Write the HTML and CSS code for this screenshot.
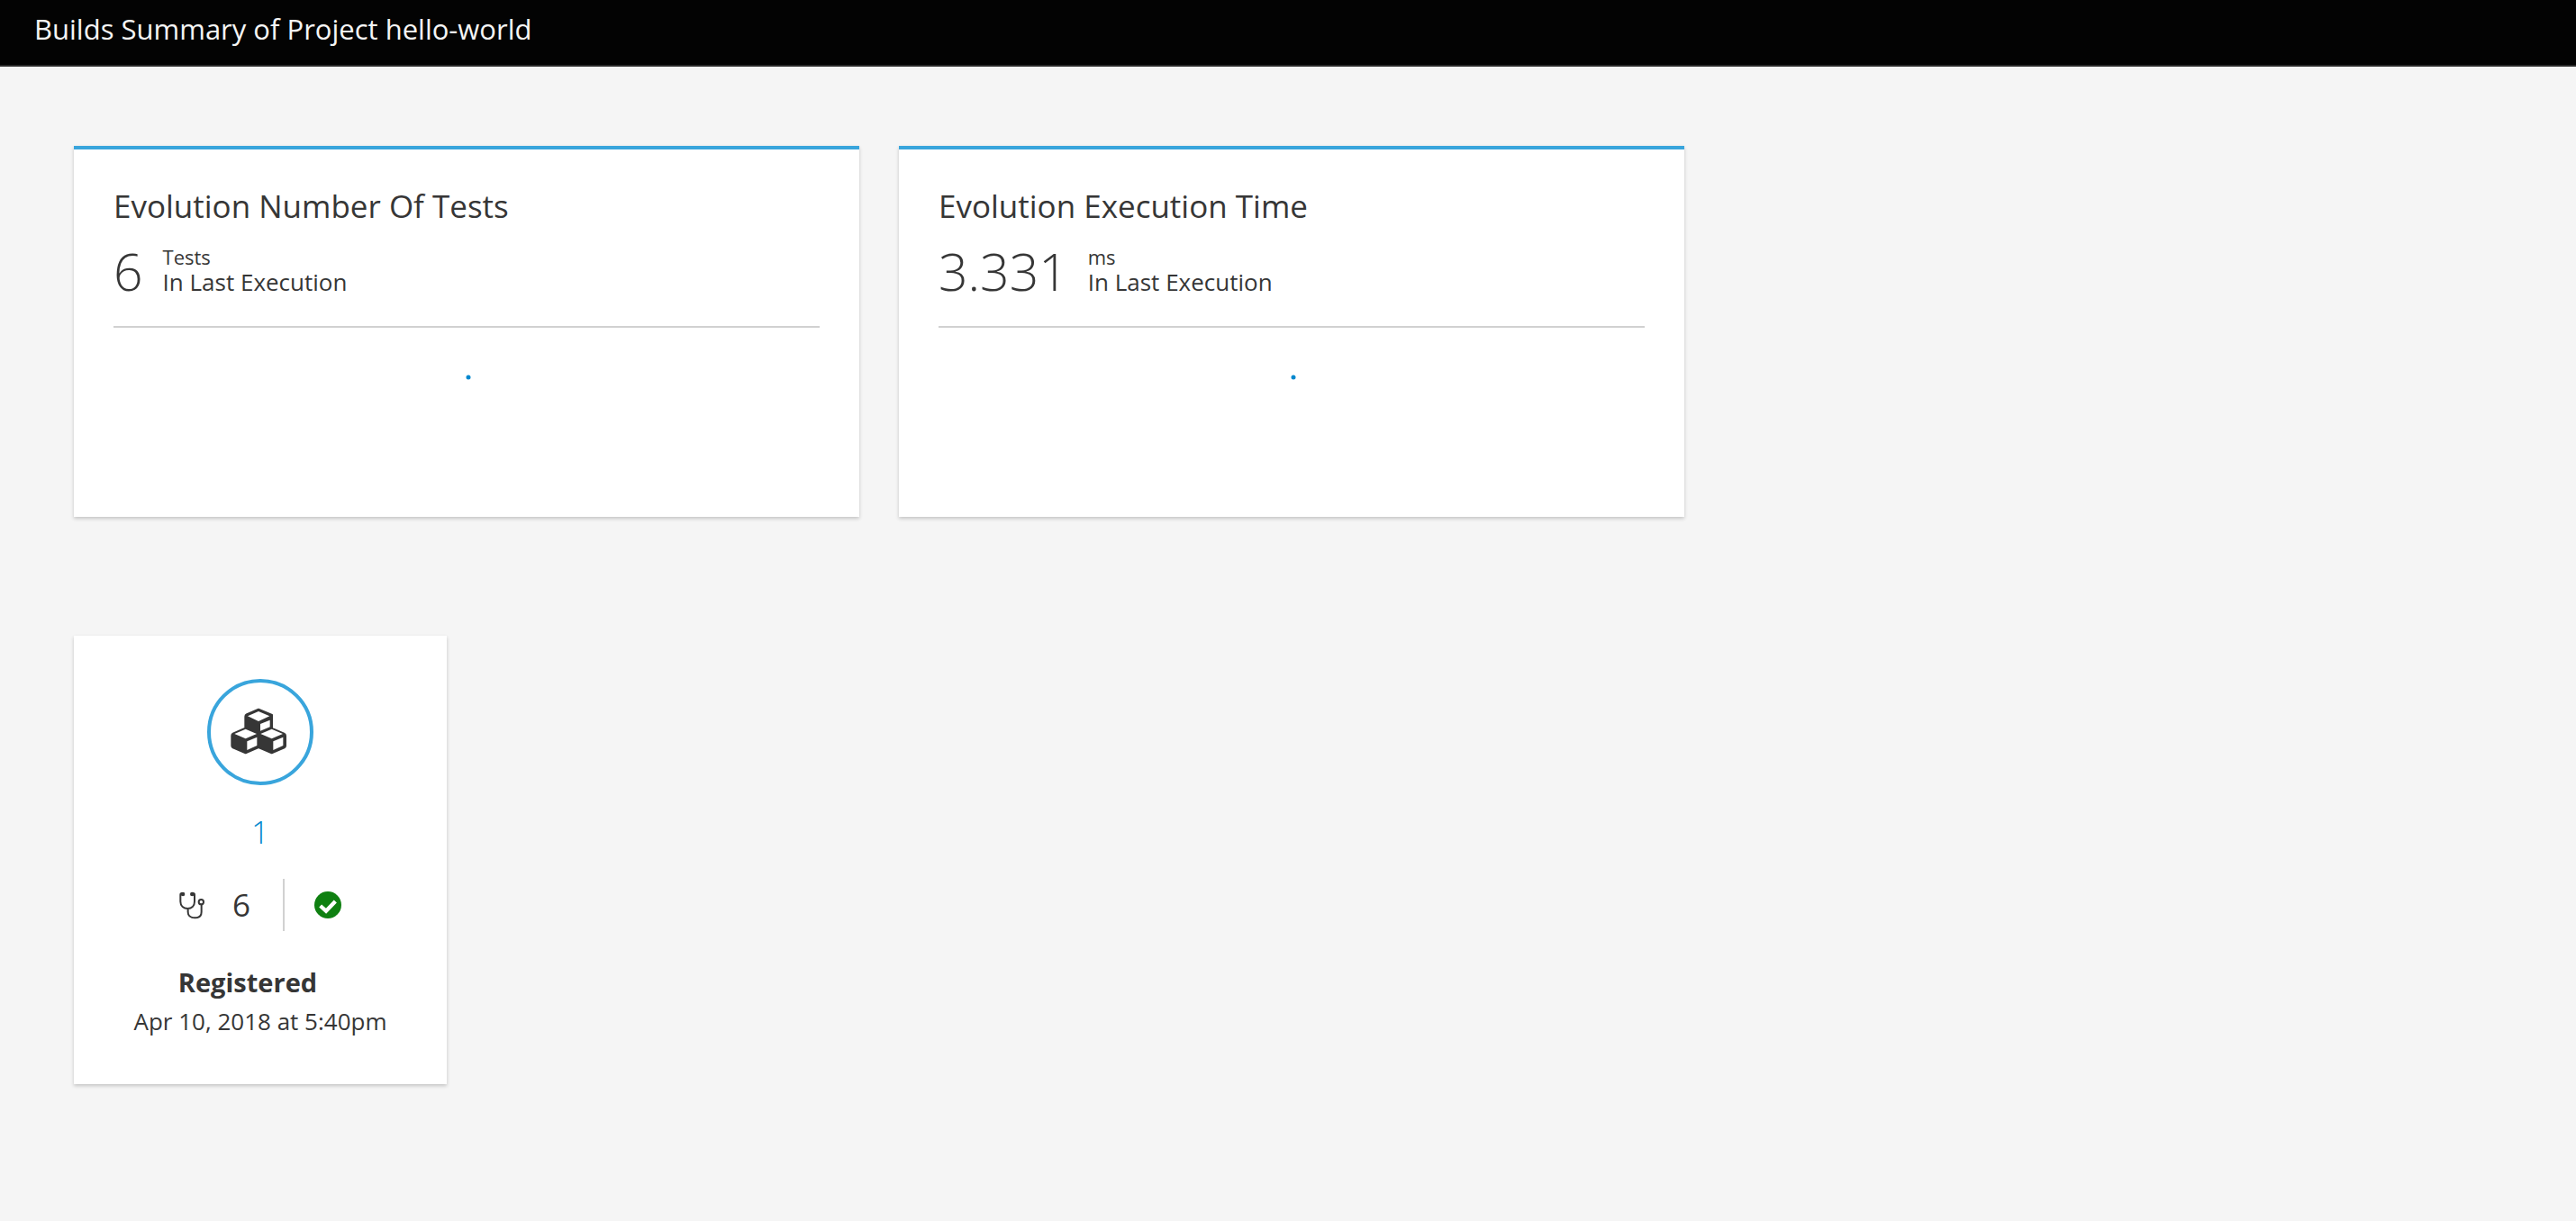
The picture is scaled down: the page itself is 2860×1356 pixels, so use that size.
FILE: index.html
```html
<!DOCTYPE html>
<html lang="en">
<head>
<meta charset="utf-8">
<title>Builds Summary of Project hello-world</title>
<link rel="stylesheet" href="styles.css">
</head>
<body>
<header class="navbar">
  <h1 class="navbar-title">Builds Summary of Project hello-world</h1>
</header>
<main class="content">
  <section class="trends">
    <article class="card card-accented">
      <h2 class="card-title">Evolution Number Of Tests</h2>
      <div class="metric">
        <span class="metric-value">6</span>
        <span class="metric-label"><small class="metric-unit">Tests</small><span>In Last Execution</span></span>
      </div>
      <svg class="sparkline" viewBox="0 0 784 120" preserveAspectRatio="xMidYMin slice" aria-hidden="true"><circle cx="394" cy="21" r="2.5"/></svg>
    </article>
    <article class="card card-accented">
      <h2 class="card-title">Evolution Execution Time</h2>
      <div class="metric">
        <span class="metric-value">3.331</span>
        <span class="metric-label"><small class="metric-unit">ms</small><span>In Last Execution</span></span>
      </div>
      <svg class="sparkline" viewBox="0 0 784 120" preserveAspectRatio="xMidYMin slice" aria-hidden="true"><circle cx="394" cy="21" r="2.5"/></svg>
    </article>
  </section>
  <section class="builds">
    <article class="card build">
      <div class="build-badge">
        <svg class="icon-cubes" viewBox="105 123 204 162" aria-hidden="true">
          <path class="cube" d="M201 128L246 147V192L286 209Q291 211 291 216V250Q291 254 287 256L245 274L201 255L158 274L116 256Q112 254 112 250V216Q112 211 116 209L157 191V152Q157 147 161 145Z"/>
          <path class="face" d="M201 135L238 151L201 168L165 151ZM207 177L239 164V187L207 200ZM158 194L195 210L158 226L121 210ZM163 235L196 221V249L163 264ZM245 194L282 210L245 226L208 210ZM250 235L283 221V249L250 264Z"/>
        </svg>
      </div>
      <h2 class="build-number"><a class="build-link" href="#build-1">1</a></h2>
      <div class="build-stats">
        <span class="build-tests">
          <svg class="icon-stethoscope" viewBox="56 60 87 93" aria-hidden="true">
            <path class="tube" d="M68 66H65Q60 66 60 71V94C60 109 71 117 84 117S107 109 107 94V71Q107 66 102 66H99M85 117V128C85 140 94 148 108 148S130 140 130 128V103"/>
            <circle class="bud" cx="68" cy="69" r="7"/><circle class="bud" cx="99" cy="69" r="7"/>
            <circle class="tube" cx="129" cy="95" r="8"/>
          </svg>
          <span>6</span>
        </span>
        <span class="build-result">
          <svg class="icon-ok" viewBox="0 0 90 90" role="img" aria-label="Passed"><circle cx="45" cy="45" r="45"/><path d="M20 48L39 65L70 33"/></svg>
        </span>
      </div>
      <p class="build-state">Registered</p>
      <p class="build-date">Apr 10, 2018 at 5:40pm</p>
    </article>
  </section>
</main>
</body>
</html>
```
FILE: styles.css
```css
* { box-sizing: border-box; }

body {
  margin: 0;
  background: #f5f5f5;
  color: #363636;
  font-family: "Open Sans", "Noto Sans", sans-serif;
  font-size: 26px;
  line-height: 44px;
}

h1, h2, p { margin: 0; }

.navbar {
  padding: 10px 38px 18px;
  background: #030303;
  border-bottom: 2px solid #292929;
}

.navbar-title {
  color: #f5f5f5;
  font-size: 31px;
  font-weight: 400;
  line-height: 44px;
}

.content { padding: 88px 74px 88px 82px; }

.trends, .builds { display: grid; gap: 44px; }
.trends { grid-template-columns: repeat(3, 1fr); }
.builds { grid-template-columns: repeat(6, 1fr); margin-top: 132px; }

.card {
  background: #fff;
  box-shadow: 0 2px 4px rgba(3, 3, 3, 0.2);
}

.card-accented {
  padding: 41px 44px 56px;
  border-top: 4px solid #39a5dc;
}

.card-title {
  font-size: 35px;
  font-weight: 400;
  line-height: 44px;
}

.metric {
  display: flex;
  align-items: flex-start;
  gap: 22px;
  height: 113px;
  padding-top: 20px;
  border-bottom: 2px solid #d1d1d1;
}

.metric-value {
  font-size: 57px;
  font-weight: 300;
  line-height: 60px;
}

.metric-label {
  display: flex;
  flex-direction: column;
  line-height: 28px;
}

.metric-unit { font-size: 22px; }

.sparkline {
  display: block;
  width: 100%;
  height: 120px;
  margin-top: 34px;
  fill: #0088ce;
}

.build {
  display: flex;
  flex-direction: column;
  align-items: center;
  padding: 48px 20px;
}

.build-badge {
  display: flex;
  align-items: center;
  justify-content: center;
  width: 118px;
  height: 118px;
  border: 4px solid #39a5dc;
  border-radius: 50%;
}

.icon-cubes { width: 68px; height: 54px; }
.cube { fill: #363636; stroke: #363636; stroke-width: 6; stroke-linejoin: round; }
.face { fill: #fff; }

.build-number {
  margin-top: 30px;
  font-size: 35px;
  font-weight: 300;
  line-height: 44px;
}

.build-link { color: #0088ce; text-decoration: none; }

.build-stats {
  display: flex;
  margin-top: 30px;
  font-size: 35px;
  line-height: 58px;
}

.build-tests, .build-result { display: flex; align-items: center; }
.build-tests { gap: 30px; padding-right: 36px; border-right: 2px solid #d1d1d1; }
.build-result { padding-left: 33px; }

.icon-stethoscope { width: 29px; height: 31px; }
.tube { fill: none; stroke: #363636; stroke-width: 6; }
.bud { fill: #363636; }

.icon-ok { width: 30px; height: 30px; fill: #0f8011; }
.icon-ok path { fill: none; stroke: #fff; stroke-width: 13; }

.build-state {
  margin-top: 36px;
  padding-right: 28px;
  font-size: 29px;
  font-weight: 700;
  line-height: 42px;
}

.build-date { line-height: 44px; }
```
